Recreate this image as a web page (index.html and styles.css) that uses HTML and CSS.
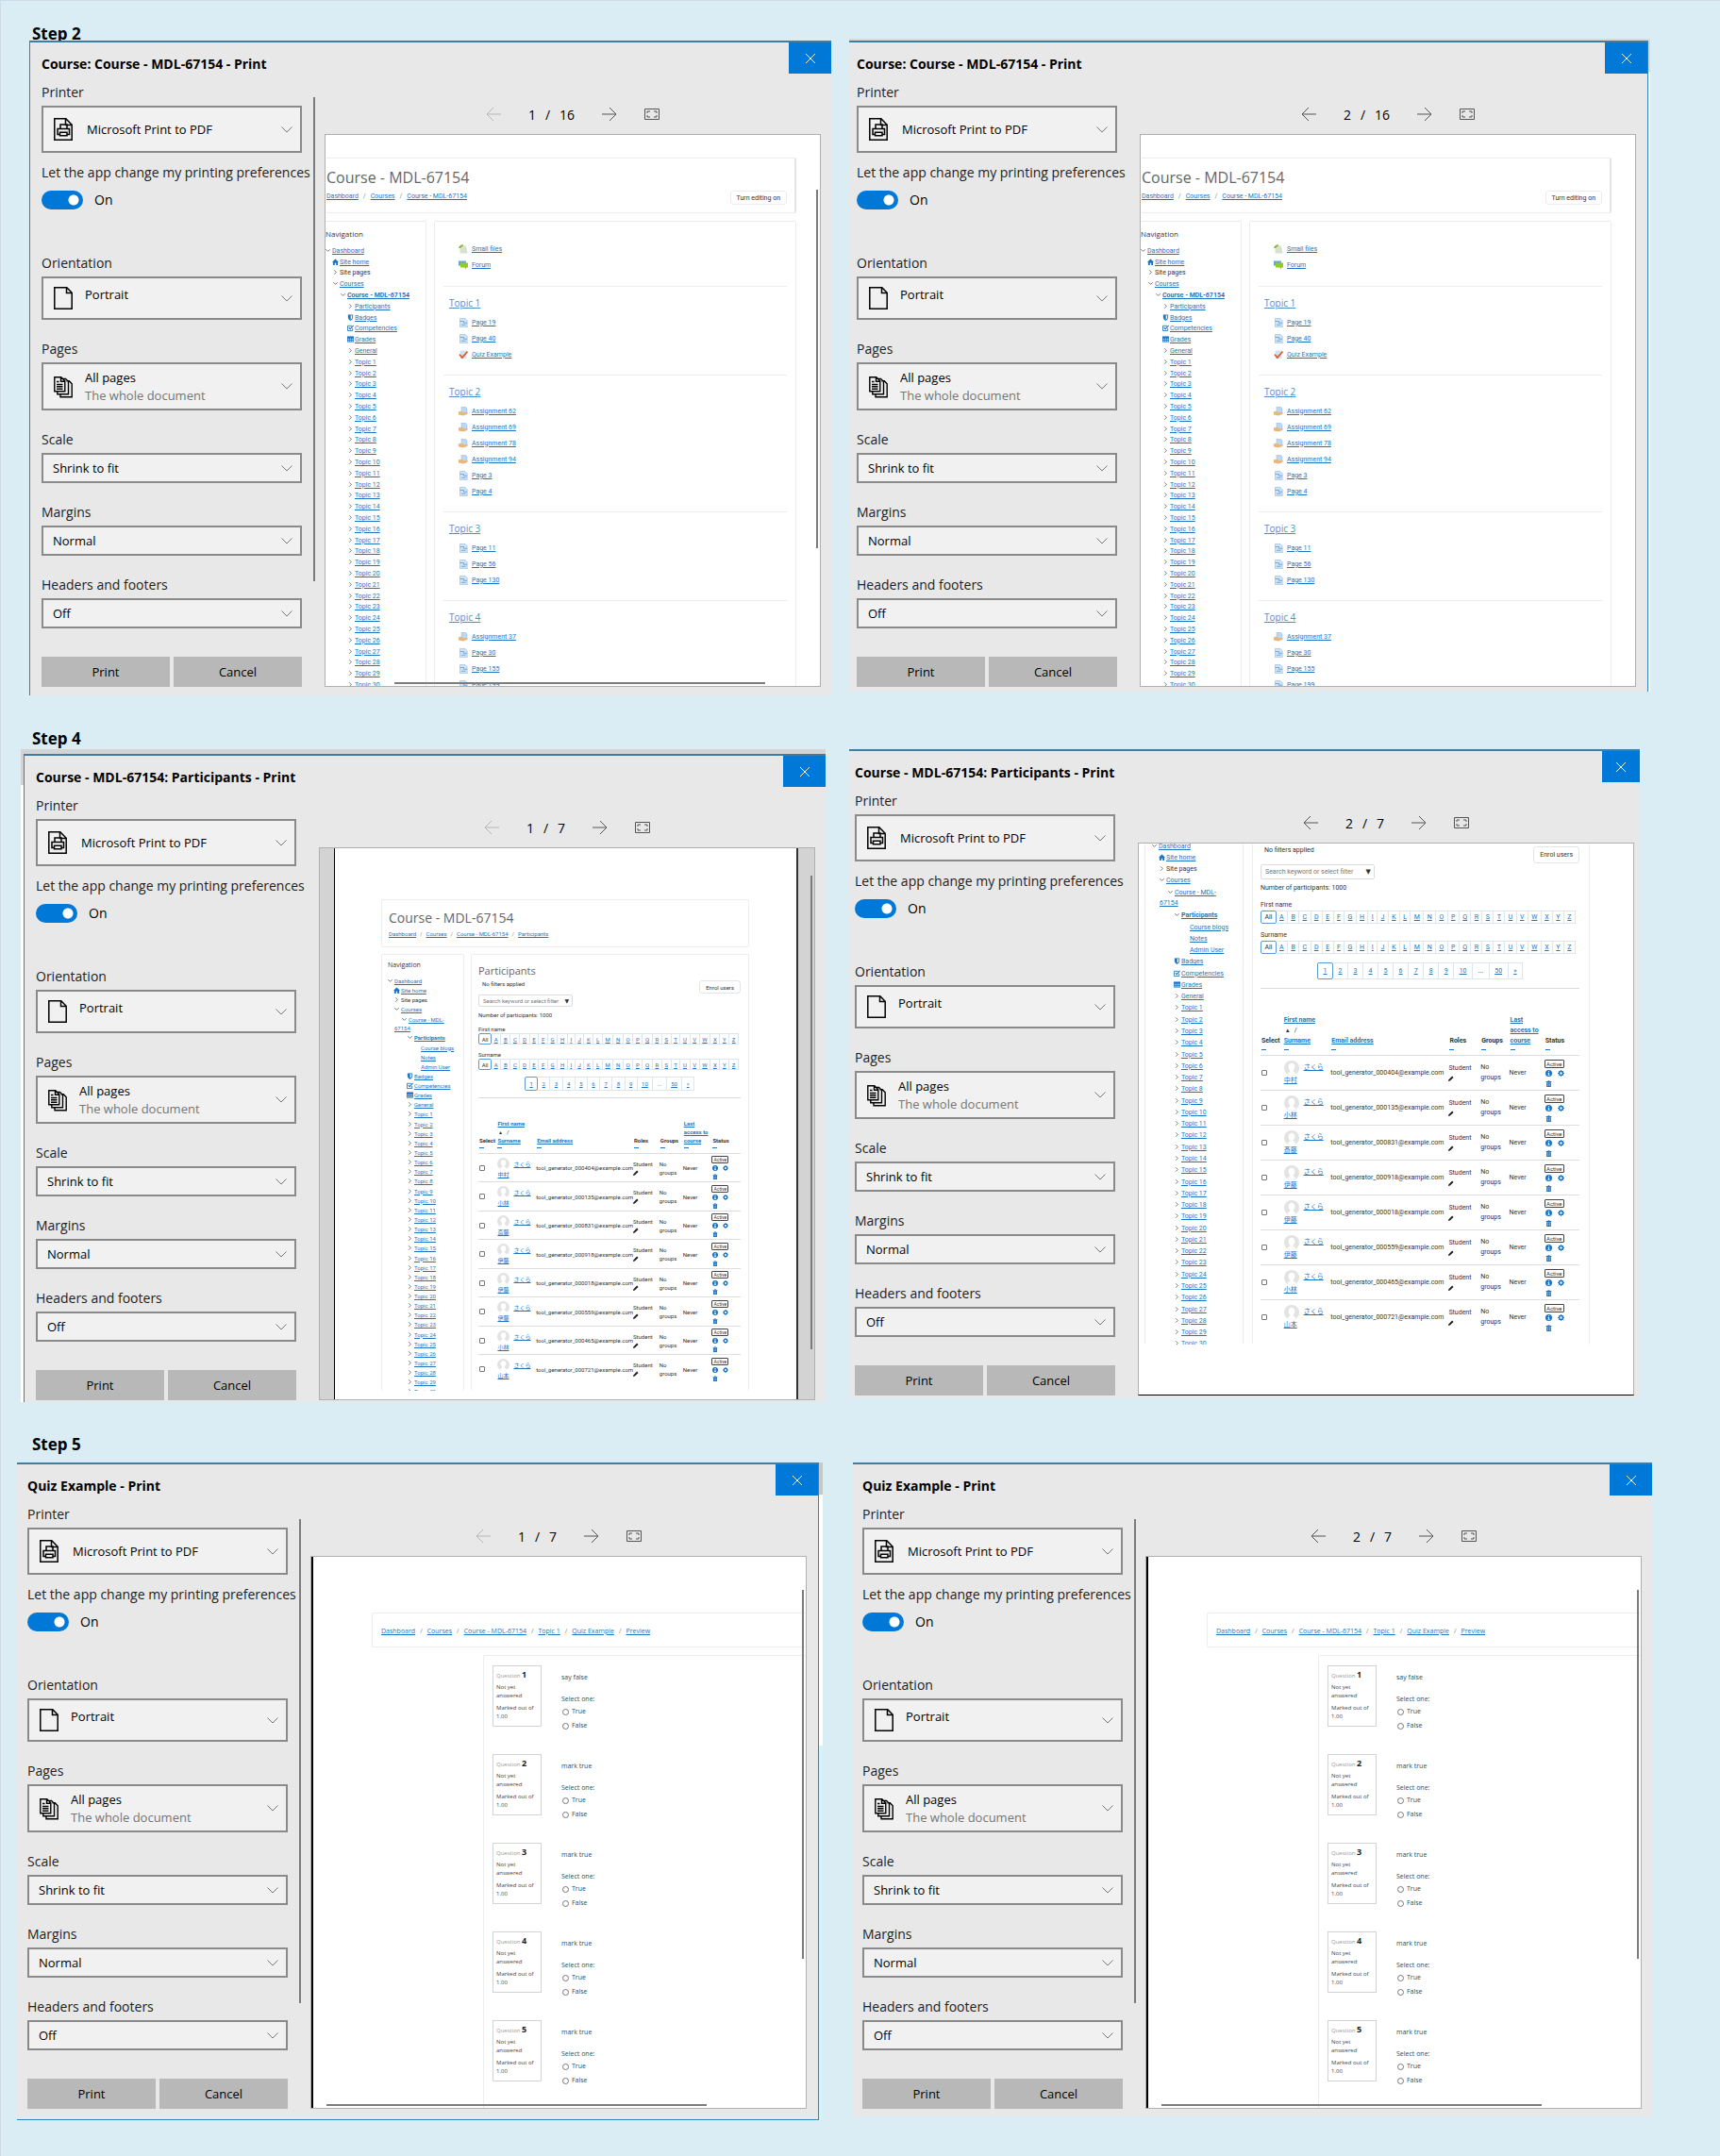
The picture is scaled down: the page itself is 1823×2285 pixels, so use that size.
FILE: index.html
```html
<!DOCTYPE html>
<html lang="en">

<head>
    <meta charset="UTF-8">
    <meta name="viewport" content="width=device-width, initial-scale=1.0">
    <title>Print previews</title>
    <link rel="stylesheet" href="styles.css">
</head>

<body>
    <svg class="symbols" width="0" height="0" aria-hidden="true">
        <symbol id="close" viewBox="0 0 12 12"><path d="M1 1l10 10M11 1L1 11" stroke="#fff" fill="none" /></symbol>
        <symbol id="arrow" viewBox="0 0 16 16"><path d="M0 8h15M8 1l7 7-7 7" stroke="currentColor" fill="none" /></symbol>
        <symbol id="fit" viewBox="0 0 16 12">
            <path d="M.5.5h15v11H.5zM3 5V3h3M10 3h3v2M13 7v2h-3M6 9H3V7" stroke="currentColor" fill="none" />
        </symbol>
        <symbol id="chevron" viewBox="0 0 12 7"><path d="M.5.5L6 6 11.500.5" stroke="#777" fill="none" /></symbol>
        <symbol id="pdf" viewBox="0 0 20 24">
            <path d="M.8.8h12l6.400 6.400v16H.8zM12.500 1v6.500H19" stroke="#000" stroke-width="1.500" fill="none" />
            <path d="M7 11.500V7h7v4.500M6.500 17.500H4v-6h12.500v6H14M6.500 15.200h7.500v3.600H6.500z" stroke="#000" stroke-width="1.500" fill="none" />
        </symbol>
        <symbol id="sheet" viewBox="0 0 20 24">
            <path d="M.8.8h13l5.400 5.400v17H.8zM13.500 1v5.500H19" stroke="#000" stroke-width="1.500" fill="none" />
        </symbol>
        <symbol id="stack" viewBox="0 0 20 24">
            <path d="M.8 1.800h7l4 4v11H.8zM7.500 2v4.200H12M3 6.500h2.500M3 9.500h6.500M3 11.800h6.500M3 14.200h6.500" stroke="#000" stroke-width="1.400" fill="none" />
            <path d="M10 3.500h2.500l3 3v13.200H3.800v-3M13.500 5.800h2.700l3 3v14H7v-3" stroke="#000" stroke-width="1.400" fill="none" />
        </symbol>
        <symbol id="down" viewBox="0 0 8 8"><path d="M1.500 2.500L4 5l2.500-2.500" stroke="#666" fill="none" /></symbol>
        <symbol id="right" viewBox="0 0 8 8"><path d="M2.500 1.500L5 4 2.500 6.500" stroke="#666" fill="none" /></symbol>
        <symbol id="home" viewBox="0 0 8 8"><path d="M0 4.200L4 .5l4 3.700H7V8H4.800V5.500H3.200V8H1V4.200z" fill="#1c75c4" /></symbol>
        <symbol id="shield" viewBox="0 0 8 8">
            <path d="M1 .5h6v3.500Q7 6.500 4 8 1 6.500 1 4z" fill="#1c75c4" /><path d="M4.200 1.500H6V4q0 1.500-1.800 2.600z" fill="#fff" />
        </symbol>
        <symbol id="check" viewBox="0 0 8 8">
            <path d="M6.500 4.500v3h-6v-6h5" stroke="#1c75c4" fill="none" /><path d="M2 3.500l1.700 1.800L7.500 1" stroke="#1c75c4" stroke-width="1.200" fill="none" />
        </symbol>
        <symbol id="grid" viewBox="0 0 8 8">
            <path d="M0 .5h8v7H0z" fill="#1c75c4" /><path d="M.8 3h1.700v1.400H.8zM3.200 3h1.700v1.400H3.200zM5.600 3h1.700v1.400H5.600zM.8 5.300h1.700v1.400H.8zM3.200 5.300h1.700v1.400H3.200zM5.600 5.300h1.700v1.400H5.600z" fill="#cfe4f6" />
        </symbol>
        <symbol id="page" viewBox="0 0 10 10">
            <path d="M1.500.5h5.500L9.200 2.700v7H1.500z" fill="#cfe3f7" stroke="#8fb8e3" stroke-width=".6" />
            <path d="M1.500 3.500h4v1.800h3.500M3 7.300h4.500" stroke="#5f9bd8" stroke-width=".8" fill="none" />
        </symbol>
        <symbol id="assign" viewBox="0 0 10 10">
            <path d="M3 0h4l2 2v5H3z" fill="#bcd8f3" stroke="#8fb8e3" stroke-width=".5" />
            <path d="M0 5.500l2-.8 5 1.800 2.800-.6-.6 2L5 9.500 0 8.500z" fill="#e9b67c" />
        </symbol>
        <symbol id="quiz" viewBox="0 0 10 10">
            <path d="M2 .5h6.500v8.500H2z" fill="#cfe3f7" /><path d="M1 4.500l2.800 3.500L9.500 1.500" stroke="#d5622b" stroke-width="1.800" fill="none" />
        </symbol>
        <symbol id="file" viewBox="0 0 10 10">
            <path d="M1.500 1.500h6.500l1.500 8h-8z" fill="#d9e0cf" /><path d="M0 4Q1 .5 5 .3v1.500Q2.500 2.300 2 4z" fill="#7cb82f" />
        </symbol>
        <symbol id="forum" viewBox="0 0 10 10">
            <path d="M0 .5h8v5H0z" fill="#6ba5dd" /><path d="M2 2.500h8v5H8.500L7.500 9.500 6.500 7.500H2z" fill="#8fce1d" />
        </symbol>
        <symbol id="user" viewBox="0 0 14 14">
            <circle cx="7" cy="7" r="7" fill="#e3e3e3" /><path d="M7 2.500a3 3 0 0 1 3 3.200q0 2-1.500 3.200v1.200l2.500 1.900Q9.200 14 7 14t-4-2l2.500-1.900V8.900Q4 7.700 4 5.700a3 3 0 0 1 3-3.200z" fill="#fff" />
        </symbol>
        <symbol id="pencil" viewBox="0 0 8 8"><path d="M0 8l.6-2.500L5.500.6l1.900 1.900-4.900 4.900z" fill="#222" /></symbol>
        <symbol id="info" viewBox="0 0 8 8">
            <circle cx="4" cy="4" r="4" fill="#1c75c4" /><path d="M3.400 1.300h1.300v1.200H3.400zM3 3.300h1.700v2.500h.5v.9H2.900v-.9h.5V4.200H3z" fill="#fff" />
        </symbol>
        <symbol id="gear" viewBox="0 0 8 8">
            <circle cx="4" cy="4" r="2.300" stroke="#1c75c4" stroke-width="1.800" fill="none" /><path d="M4 0v8M0 4h8M1.200 1.200l1 1M5.800 5.800l1 1M6.800 1.200l-1 1M2.200 5.800l-1 1" stroke="#1c75c4" stroke-dasharray="1.200 5.600" />
        </symbol>
        <symbol id="trash" viewBox="0 0 8 8"><path d="M.8 1.200h2L3.300.3h1.400l.5.900h2v1H.8zM1.300 2.700h5.400V8H1.300z" fill="#1c75c4" /><path d="M3 3.700v3.200M5 3.700v3.200" stroke="#fff" stroke-width=".5" /></symbol>
    </svg>

    <section class="step step-2">
        <h2>Step 2</h2>
        <div class="dialogs"></div>
    </section>
    <section class="step step-4">
        <h2>Step 4</h2>
        <div class="dialogs"></div>
    </section>
    <section class="step step-5">
        <h2>Step 5</h2>
        <div class="dialogs"></div>
    </section>

    <script src="script.js"></script>
</body>

</html>
```
FILE: styles.css
```css
* {
    box-sizing: border-box;
}

body {
    margin: 0;
    border-top: 1px solid #cfdbe8;
    border-left: 1px solid #cfdbe8;
    background: #daedf4;
    color: #000;
    font-family: "Open Sans", "Noto Sans CJK JP", sans-serif;
    font-size: 13px;
}

h1, h2, h3, p, ul {
    margin: 0;
    padding: 0;
    list-style: none;
}

a {
    color: #1c75c4;
}

svg {
    display: block;
}

.symbols {
    position: absolute;
}

/* steps */
.step h2 {
    font-size: 17px;
    line-height: 22px;
}

.dialogs {
    display: grid;
    align-items: start;
}

.step-2 {
    padding: 24px 74px 0 30px;
}

.step-2 h2 {
    padding-left: 3px;
    margin-bottom: -6px;
}

.step-2 .dialogs {
    grid-template-columns: 850fr 849fr;
    gap: 19px;
}

.step-4 {
    padding: 35px 85px 0 21px;
}

.step-4 h2 {
    padding-left: 12px;
}

.step-4 .dialogs {
    grid-template-columns: 853fr 838fr;
    gap: 25px;
}

.step-5 {
    padding: 34px 72px 38px 17px;
}

.step-5 h2 {
    padding-left: 16px;
    margin-bottom: 8px;
}

.step-5 .dialogs {
    grid-template-columns: 854fr 847fr;
    gap: 32px;
}

/* what shows of the browser behind the dialog */
.frame-a {
    padding-top: 2px;
}

.frame-b {
    padding: 2px 2px 0 0;
    background: linear-gradient(#d9d9d9 35px, #fff 35px);
}

.frame-c {
    padding: 5px 0 0 3px;
    background: linear-gradient(#d3d3d3 38px, #fff 38px);
}

.frame-e {
    padding-right: 4px;
    background: linear-gradient(#c8c8c8 34px, #fff 34px, #fff 300px, #d2f3fa 300px);
}

/* dialog */
.dialog {
    position: relative;
    border-top: 2px solid #3b7ea6;
    background: #e8e8e8;
}

.dialog-head {
    display: flex;
    justify-content: space-between;
    align-items: flex-start;
}

.dialog-head h1 {
    padding-top: 13px;
    font-size: 14px;
    line-height: 20px;
}

.close {
    display: grid;
    place-items: center;
    width: 45px;
    height: 33px;
    padding: 0;
    border: 0;
    background: #0078d7;
}

.close svg {
    width: 12px;
    height: 12px;
}

.dialog-body {
    display: grid;
    grid-template-columns: 276px 24px minmax(0, 1fr);
}

.dialog-a .dialog-head {
    padding-left: 12px;
}

.dialog-a .dialog-body {
    padding: 0 11px 9px 12px;
}

.dialog-b .dialog-head {
    padding-left: 8px;
}

.dialog-b .dialog-body {
    padding: 0 12px 5px 8px;
}

.dialog-c .dialog-head {
    padding-left: 12px;
}

.dialog-c .dialog-body {
    padding: 0 11px 2px 12px;
}

.dialog-d .dialog-head {
    padding-left: 6px;
}

.dialog-d .close {
    width: 40px;
}

.dialog-d .dialog-body {
    padding: 0 6px 3px 6px;
}

.dialog-e .dialog-head {
    padding-left: 11px;
}

.dialog-e .dialog-body {
    padding: 0 12px 11px 11px;
}

.dialog-f .dialog-head {
    padding-left: 10px;
}

.dialog-f .dialog-body {
    padding: 0 11px 8px 10px;
}

.dialog-a, .dialog-c {
    border-left: 1px solid #3b7ea6;
}

.dialog-b, .dialog-e {
    border-right: 1px solid #2b87c4;
}

.dialog-e {
    border-bottom: 1px solid #2b87c4;
}

/* settings form */
.settings {
    display: flex;
    flex-direction: column;
    gap: 21px;
    padding-top: 10px;
}

.dialog-head + .dialog-body {
    margin-top: 0;
}

.field label {
    display: block;
    margin-bottom: 4px;
    color: #222;
    font-size: 14px;
    line-height: 20px;
    white-space: nowrap;
}

.picker {
    display: grid;
    align-items: center;
}

.picker > * {
    grid-area: 1 / 1;
}

.picker select {
    appearance: none;
    width: 100%;
    height: 32px;
    padding: 0 28px 0 10px;
    border: 2px solid #8a8a8a;
    border-radius: 0;
    background: #f1f1f1;
    color: #000;
    font: inherit;
}

.picker-icon {
    width: 20px;
    height: 24px;
    margin-left: 13px;
    pointer-events: none;
}

.picker-chevron {
    justify-self: end;
    width: 12px;
    height: 7px;
    margin-right: 10px;
    pointer-events: none;
}

.picker-note {
    align-self: end;
    padding: 0 0 6px 46px;
    color: #767676;
    line-height: 20px;
    pointer-events: none;
}

.picker-printer select {
    height: 50px;
    padding-left: 46px;
}

.picker-orientation select {
    height: 46px;
    padding: 0 28px 8px 44px;
}

.picker-pages select {
    height: 51px;
    padding: 0 28px 20px 44px;
}

.switch-field {
    margin: -10px 0 26px;
}

.switch-field .title {
    margin-bottom: 9px;
}

.switch-row {
    display: flex;
    align-items: center;
    gap: 12px;
    font-size: 14px;
    line-height: 20px;
}

.switch-row input {
    appearance: none;
    width: 44px;
    height: 20px;
    margin: 0;
    border-radius: 10px;
    background: radial-gradient(circle at 34px 10px, #fff 5px, #0078d7 6px);
}

.actions {
    display: flex;
    gap: 4px;
    padding-top: 9px;
}

.actions button {
    flex: 1;
    height: 32px;
    padding: 0;
    border: 0;
    background: #b8b8b8;
    font: inherit;
}

.rail {
    padding: 25px 0 0 12px;
}

.rail i {
    display: block;
    width: 2px;
    height: 513px;
    background: #7c7c7c;
}

/* preview side */
.viewer {
    display: flex;
    flex-direction: column;
    padding-top: 22px;
}

.pager {
    display: flex;
    justify-content: center;
    align-items: center;
    gap: 29px;
    height: 42px;
    font-size: 14px;
}

.pager p {
    display: flex;
    gap: 10px;
}

.pager button {
    padding: 0;
    border: 0;
    background: none;
    color: #555;
}

.pager button:disabled {
    color: #b5b5b5;
}

.pager svg {
    width: 16px;
    height: 16px;
}

.pager .back svg {
    transform: scaleX(-1);
}

.pager .fit svg {
    height: 12px;
}

.preview {
    position: relative;
    flex: 1;
    contain: size;
    overflow: hidden;
    border: 1px solid #b0b0b0;
    background: #fff;
}

.thumb {
    position: absolute;
    background: #7c7c7c;
}

.thumb-y {
    right: 2px;
    width: 2px;
}

.thumb-x {
    bottom: 2px;
    height: 2px;
}

/* printed pages */
.page {
    --row: 10px;
    --indent: 8px;
    --crumb: 5px;
    color: #333;
    font-family: Roboto, "Noto Sans CJK JP", sans-serif;
    font-size: 7px;
    line-height: var(--row);
}

.page h3, .page h4 {
    margin: 0;
    color: #666;
    font-family: "Open Sans", sans-serif;
    font-weight: 400;
}

.card {
    overflow: hidden;
    border: 1px solid #ececec;
    border-radius: 2px;
}

.crumbs, .crumbs li {
    display: flex;
    gap: var(--crumb);
}

.crumbs li + li::before {
    content: "/";
    color: #888;
}

.page button {
    border: 1px solid #ececec;
    border-radius: 3px;
    background: #fff;
    color: #333;
    padding: 0 6px;
    font: inherit;
}

.tree {
    display: grid;
    grid-auto-rows: 1fr;
    white-space: nowrap;
}

.tree li {
    display: flex;
    align-items: center;
}

.tree svg {
    display: inline-block;
    width: 7px;
    height: 7px;
    margin: 0 1px 0 -1px;
    vertical-align: -1px;
}

.tree i {
    display: inline-block;
    width: var(--indent);
}

.lvl-1 { padding-left: var(--indent); }
.lvl-2 { padding-left: calc(var(--indent) * 2); }
.lvl-3 { padding-left: calc(var(--indent) * 3); }
.lvl-4 { padding-left: calc(var(--indent) * 4); }

.tree .wide {
    grid-row: span 2;
}

.tree .wide svg {
    margin-left: var(--indent);
}

/* course page */
.course {
    padding: 24px 25px 0 0;
}

.course .card-head {
    display: flex;
    justify-content: space-between;
    align-items: flex-end;
    margin-bottom: 8px;
    padding: 10px 8px 8px 1px;
    border-left: 0;
    border-right: 2px solid #e4e4e4;
}

.course .card-head h3 {
    font-size: 16px;
    line-height: 20px;
}

.course .crumbs {
    padding: 5px 0 4px;
}

.course button {
    height: 15px;
}

.course .columns {
    display: grid;
    grid-template-columns: 107px minmax(0, 1fr);
    gap: 8px;
}

.course .nav {
    padding-top: 7px;
    border-left: 0;
}

.nav h4 {
    color: #333;
}

.course .nav h4 {
    margin-bottom: 6px;
    font-size: 8px;
    line-height: 12px;
}

.course .tree {
    height: 472px;
}

.course .main {
    padding: 0 9px;
}

.course .topic {
    padding: 8px 0 13px;
    border-bottom: 1px solid #ececec;
}

.course .topic:first-child {
    padding: 20px 0 14px;
}

.topic h4 {
    margin: 0 0 3px 6px;
    font-size: 10px;
    line-height: 18px;
}

.topic h4 a {
    color: #4a90d0;
}

.topic li {
    display: flex;
    align-items: center;
    gap: 4px;
    height: 17px;
    padding-left: 16px;
}

.topic svg {
    width: 10px;
    height: 10px;
}

/* participants page */
.participants {
    --row: 9px;
    --indent: 7px;
    --crumb: 4px;
    --bar: 12px;
    --gap: 6px;
    --foot: 15px;
    margin: 0 17px 0 15px;
    height: 100%;
    padding: 54px 50px 0 49px;
    border-left: 1px solid #000;
    border-right: 2px solid #333;
    background: #fff;
    font-size: 6px;
}

.dialog-c .preview {
    background: #d3d3d3;
}

.dialog-d .preview {
    border-bottom-color: #000;
}

.participants.large {
    --row: 11px;
    --indent: 8px;
    --bar: 14px;
    --gap: 7px;
    --foot: 18px;
    margin: 0;
    padding: 0 46px 0 6px;
    border: 0;
    font-size: 7px;
}

.participants .card-head {
    margin-bottom: 7px;
    padding: 10px 7px 9px;
}

.participants .card-head h3 {
    margin-bottom: 3px;
    font-size: 14px;
    line-height: 18px;
}

.participants .columns {
    display: grid;
    grid-template-columns: 88px minmax(0, 1fr);
    gap: 7px;
    height: 463px;
}

.large .columns {
    grid-template-columns: 105px minmax(0, 1fr);
    gap: 9px;
    height: 531px;
}

.participants .card {
    border-bottom: 0;
}

.participants .card-head {
    border-bottom: 1px solid #ececec;
}

.large .card {
    border-top: 0;
}

.participants .nav {
    padding: 6px 6px 0;
}

.large .nav {
    padding: 0 7px;
}

.participants .nav h4 {
    margin-bottom: 6px;
    font-size: 7px;
    line-height: 10px;
}

.participants .tree {
    height: 446px;
}

.large .tree {
    height: 540px;
    margin-top: -3px;
}

.participants .main {
    padding: 9px 8px 0 7px;
}

.large .main {
    padding: 2px 10px 0 8px;
}

.main-title {
    font-size: 11px;
    line-height: 15px;
}

.participants .main-title {
    margin-bottom: 2px;
}

.filters {
    display: flex;
    justify-content: space-between;
    padding-left: 4px;
}

.filters button {
    height: 14px;
    margin: 1px 0 -6px;
    border-color: #e4e4e4;
}

.large .filters button {
    height: 18px;
    margin-bottom: -8px;
}

.keyword {
    display: flex;
    align-items: center;
    width: 100px;
    height: 13px;
    margin: 7px 0 4px;
    border: 1px solid #dcdcdc;
    border-radius: 2px;
}

.large .keyword {
    width: 121px;
    height: 16px;
    margin-top: 9px;
}

.keyword input {
    flex: 1;
    min-width: 0;
    padding: 0 0 0 4px;
    border: 0;
    background: none;
    font: inherit;
}

.keyword input::placeholder {
    color: #777;
}

.keyword::after {
    content: "▼";
    padding-right: 3px;
    font-family: "DejaVu Sans", sans-serif;
}

.initials {
    padding-top: var(--gap);
}

.initials ul, .pages ul {
    display: flex;
    width: 276px;
    height: var(--bar);
}

.large .initials ul {
    width: 334px;
}

.initials li, .pages li {
    display: grid;
    flex: 1 1 auto;
    place-items: center;
    padding: 0 2px;
    border: 1px solid #dde6ee;
    border-left: 0;
}

.initials li:first-child, .pages li:first-child {
    border: 1px solid #5b9bd5;
    border-radius: 2px;
}

.pages {
    display: flex;
    justify-content: center;
    padding: 7px 0;
    border-bottom: 1px solid #dcdcdc;
}

.pages ul {
    width: 180px;
    height: var(--foot);
}

.large .pages {
    padding: 9px 0;
}

.large .pages ul {
    width: 218px;
}

.people {
    width: 100%;
    margin-top: 22px;
    border-collapse: collapse;
    table-layout: fixed;
}

.large .people {
    margin-top: 28px;
}

.people th, .people td {
    padding: 0;
    text-align: left;
    white-space: nowrap;
}

.people th {
    padding: 0 0 5px 1px;
    vertical-align: bottom;
}

.people th::after {
    content: "";
    display: block;
    width: 5px;
    height: 1px;
    margin-top: 3px;
    background: #1c75c4;
}

.people td {
    height: 30px;
    border-top: 1px solid #dedede;
    vertical-align: middle;
}

.people tr:nth-child(even) td {
    height: 31px;
}

.large .people tbody td {
    height: 37px;
}

.people input {
    appearance: none;
    display: block;
    width: 6px;
    height: 6px;
    margin: 0 0 0 1px;
    border: 1px solid #777;
    border-radius: 1px;
}

.people .sorter {
    padding-left: 2px;
    font-weight: 400;
}

.person {
    display: grid;
    grid-template-columns: 13px 1fr;
    align-items: center;
    column-gap: 4px;
    padding-left: 1px;
}

.large .person {
    grid-template-columns: 16px 1fr;
    column-gap: 5px;
}

.person svg {
    width: 13px;
    height: 13px;
}

.large .person svg {
    width: 16px;
    height: 16px;
}

.pencil {
    width: 6px;
    height: 6px;
    margin: 2px 0 1px;
}

.badge {
    display: block;
    width: 18px;
    height: 8px;
    border: 1px solid #444;
    border-radius: 1px;
    font-size: 5px;
    line-height: 6px;
    text-align: center;
}

.large .badge {
    width: 21px;
    height: 9px;
    font-size: 6px;
    line-height: 7px;
}

.tools {
    display: grid;
    grid-template-columns: 6px 6px;
    gap: 3px 5px;
    padding: 2px 0 0 1px;
}

.tools svg {
    width: 6px;
    height: 6px;
}

.large .tools {
    grid-template-columns: 7px 7px;
    gap: 4px 6px;
}

.large .tools svg {
    width: 7px;
    height: 7px;
}

/* quiz page */
.quiz {
    height: 100%;
    padding-top: 59px;
    border-left: 2px solid #000;
    font-family: "Open Sans", sans-serif;
}

.quiz .card {
    border-right: 0;
    border-bottom: 0;
}

.quiz .card-head {
    height: 37px;
    margin: 0 0 8px 62px;
    padding: 14px 0 0 9px;
    border-bottom: 1px solid #ececec;
}

.quiz .main {
    height: 100%;
    margin-left: 180px;
    padding: 10px 0 0 9px;
}

.question {
    display: grid;
    grid-template-columns: 52px 1fr;
    align-items: start;
    gap: 21px;
    height: 94px;
    color: #24505f;
}

.question-info {
    padding: 3px 3px 1px;
    border: 1px solid #cfd4d8;
    color: #444;
    font-size: 6px;
    line-height: 9px;
}

.question-info p {
    margin-bottom: 4px;
}

.question-info h4 {
    margin-bottom: 2px;
    color: #999;
    font-size: 6px;
    line-height: 11px;
}

.question-info strong {
    color: #222;
    font-size: 9px;
}

.question fieldset {
    margin: 0;
    padding: 8px 0 0;
    border: 0;
}

.question legend {
    float: left;
    width: 100%;
    margin-bottom: 13px;
    padding: 0;
}

.question label {
    display: flex;
    align-items: center;
    gap: 3px;
    margin: 3px 0 5px 1px;
}

.question fieldset p {
    clear: both;
}

.question input {
    appearance: none;
    width: 7px;
    height: 7px;
    margin: 0;
    border: 1px solid #777;
    border-radius: 50%;
}
```
FILE: script.js
```js
const icon = (name, cls = '') => `<svg class="${cls}" aria-hidden="true"><use href="#${name}"></use></svg>`;
const link = text => `<a href="#">${text}</a>`;
const list = (items, fn) => items.map(fn).join('');

const topicRows = Array.from({ length: 30 }, (_, i) => [3, 'right', `Topic ${i + 1}`]);

const courseTree = [
    [0, 'down', 'Dashboard'], [1, 'home', 'Site home'], [1, 'right', 'Site pages', 'plain'], [1, 'down', 'Courses'],
    [2, 'down', '<b>Course - MDL-67154</b>'], [3, 'right', 'Participants'], [3, 'shield', 'Badges'],
    [3, 'check', 'Competencies'], [3, 'grid', 'Grades'], [3, 'right', 'General'], ...topicRows
];

const participantsTree = [
    [0, 'down', 'Dashboard'], [1, 'home', 'Site home'], [1, 'right', 'Site pages', 'plain'], [1, 'down', 'Courses'],
    [1, 'down', 'Course - MDL-<br>67154', 'wide'], [3, 'down', '<b>Participants</b>'], [4, '', 'Course blogs'],
    [4, '', 'Notes'], [4, '', 'Admin User'], [3, 'shield', 'Badges'], [3, 'check', 'Competencies'],
    [3, 'grid', 'Grades'], [3, 'right', 'General'], ...topicRows
];

const topics = [
    ['', [['file', 'Small files'], ['forum', 'Forum']]],
    ['Topic 1', [['page', 'Page 19'], ['page', 'Page 40'], ['quiz', 'Quiz Example']]],
    ['Topic 2', [['assign', 'Assignment 62'], ['assign', 'Assignment 69'], ['assign', 'Assignment 78'],
        ['assign', 'Assignment 94'], ['page', 'Page 3'], ['page', 'Page 4']]],
    ['Topic 3', [['page', 'Page 11'], ['page', 'Page 56'], ['page', 'Page 130']]],
    ['Topic 4', [['assign', 'Assignment 37'], ['page', 'Page 30'], ['page', 'Page 155'], ['page', 'Page 199']]]
];

const people = [
    ['中村', '000404'], ['小林', '000135'], ['斎藤', '000831'], ['伊藤', '000918'],
    ['伊藤', '000018'], ['伊藤', '000559'], ['小林', '000465'], ['山本', '000721']
];

const questions = ['say false', 'mark true', 'mark true', 'mark true', 'mark true'];

const crumbs = items => `<ul class="crumbs">${list(items, t => `<li>${link(t)}</li>`)}</ul>`;

const tree = rows => `<ul class="tree">${list(rows, ([lvl, ic, text, cls]) => `
    <li class="lvl-${lvl} ${cls || ''}"><span>${ic ? icon(ic) : '<i></i>'}${cls === 'plain' ? text : link(text)}</span></li>`)}</ul>`;

const coursePage = () => `
    <div class="page course">
        <div class="card card-head">
            <div>
                <h3>Course - MDL-67154</h3>
                ${crumbs(['Dashboard', 'Courses', 'Course - MDL-67154'])}
            </div>
            <button type="button">Turn editing on</button>
        </div>
        <div class="columns">
            <div class="card nav"><h4>Navigation</h4>${tree(courseTree)}</div>
            <div class="card main">${list(topics, ([name, items]) => `
                <div class="topic">
                    ${name ? `<h4>${link(name)}</h4>` : ''}
                    <ul>${list(items, ([ic, text]) => `<li>${icon(ic)}${link(text)}</li>`)}</ul>
                </div>`)}
            </div>
        </div>
    </div>`;

const initials = title => `
    <div class="initials">
        <p>${title}</p>
        <ul><li>All</li>${list([...'ABCDEFGHIJKLMNOPQRSTUVWXYZ'], c => `<li>${link(c)}</li>`)}</ul>
    </div>`;

const participantsPage = (id, large) => `
    <div class="page participants ${large ? 'large' : ''}">
        ${large ? '' : `<div class="card card-head">
            <h3>Course - MDL-67154</h3>
            ${crumbs(['Dashboard', 'Courses', 'Course - MDL-67154', 'Participants'])}
        </div>`}
        <div class="columns">
            <div class="card nav">${large ? '' : '<h4>Navigation</h4>'}${tree(participantsTree)}</div>
            <div class="card main">
                ${large ? '' : '<h3 class="main-title">Participants</h3>'}
                <div class="filters"><p>No filters applied</p><button type="button">Enrol users</button></div>
                <div class="keyword"><input type="text" aria-label="Search keyword or select filter" placeholder="Search keyword or select filter"></div>
                <p>Number of participants: 1000</p>
                ${initials('First name')}
                ${initials('Surname')}
                <div class="pages"><ul>${list(['1', '2', '3', '4', '5', '6', '7', '8', '9', '10', '...', '50', '»'], n =>
                    `<li>${n === '...' ? n : link(n)}</li>`)}</ul></div>
                <table class="people">
                    <colgroup><col style="width:7%"><col style="width:15%"><col style="width:37%"><col style="width:10%"><col style="width:9%"><col style="width:11%"><col style="width:11%"></colgroup>
                    <thead><tr>
                        <th>Select</th><th>${link('First name')}<br><span class="sorter">▴ &nbsp; /</span><br>${link('Surname')}</th>
                        <th>${link('Email address')}</th><th>Roles</th><th>Groups</th>
                        <th>${link('Last<br>access to<br>course')}</th><th>Status</th>
                    </tr></thead>
                    <tbody>${list(people, ([name, num], i) => `
                        <tr>
                            <td><input type="checkbox" id="${id}-p${i}" aria-label="Select ${name}"></td>
                            <td><div class="person">${icon('user')}${link('さくら')}${link(name)}</div></td>
                            <td>tool_generator_${num}@example.com</td>
                            <td>Student${icon('pencil', 'pencil')}</td>
                            <td>No<br>groups</td>
                            <td>Never</td>
                            <td><span class="badge">Active</span><div class="tools">${icon('info')}${icon('gear')}${icon('trash')}</div></td>
                        </tr>`)}
                    </tbody>
                </table>
            </div>
        </div>
    </div>`;

const quizPage = id => `
    <div class="page quiz">
        <div class="card card-head">${crumbs(['Dashboard', 'Courses', 'Course - MDL-67154', 'Topic 1', 'Quiz Example', 'Preview'])}</div>
        <div class="card main">${list(questions, (text, i) => `
            <div class="question">
                <div class="question-info">
                    <h4>Question <strong>${i + 1}</strong></h4>
                    <p>Not yet<br>answered</p>
                    <p>Marked out of<br>1.00</p>
                </div>
                <fieldset>
                    <legend>${text}</legend>
                    <p>Select one:</p>
                    <label><input type="radio" name="${id}-q${i}">True</label>
                    <label><input type="radio" name="${id}-q${i}">False</label>
                </fieldset>
            </div>`)}
        </div>
    </div>`;

const picker = (id, name, label, value, ic, note) => `
    <div class="field">
        <label for="${id}-${name}">${label}</label>
        <div class="picker picker-${name}">
            <select id="${id}-${name}"><option>${value}</option></select>
            ${ic ? icon(ic, 'picker-icon') : ''}
            ${note ? `<span class="picker-note">${note}</span>` : ''}
            ${icon('chevron', 'picker-chevron')}
        </div>
    </div>`;

// thumbs: [axis, start %, length %]
const dialog = ({ id, title, page, total, content, rail, thumbs }) => `
    <div class="frame frame-${id}">
        <div class="dialog dialog-${id}">
            <div class="dialog-head">
                <h1>${title}</h1>
                <button class="close" type="button" aria-label="Close">${icon('close')}</button>
            </div>
            <div class="dialog-body">
                <form class="settings">
                    ${picker(id, 'printer', 'Printer', 'Microsoft Print to PDF', 'pdf')}
                    <div class="field switch-field">
                        <label class="title" for="${id}-prefs">Let the app change my printing preferences</label>
                        <div class="switch-row"><input type="checkbox" role="switch" id="${id}-prefs" checked><span>On</span></div>
                    </div>
                    ${picker(id, 'orientation', 'Orientation', 'Portrait', 'sheet')}
                    ${picker(id, 'pages', 'Pages', 'All pages', 'stack', 'The whole document')}
                    ${picker(id, 'scale', 'Scale', 'Shrink to fit')}
                    ${picker(id, 'margins', 'Margins', 'Normal')}
                    ${picker(id, 'headers', 'Headers and footers', 'Off')}
                    <div class="actions"><button type="button">Print</button><button type="button">Cancel</button></div>
                </form>
                <div class="rail">${rail ? '<i></i>' : ''}</div>
                <div class="viewer">
                    <div class="pager">
                        <button class="back" type="button" aria-label="Previous page" ${page === 1 ? 'disabled' : ''}>${icon('arrow')}</button>
                        <p><span>${page}</span><span>/</span><span>${total}</span></p>
                        <button type="button" aria-label="Next page">${icon('arrow')}</button>
                        <button class="fit" type="button" aria-label="Fit to window">${icon('fit')}</button>
                    </div>
                    <div class="preview">
                        ${content}
                        ${list(thumbs, ([axis, start, size]) => axis === 'y'
                            ? `<span class="thumb thumb-y" style="top:${start}%;height:${size}%"></span>`
                            : `<span class="thumb thumb-x" style="left:${start}%;width:${size}%"></span>`)}
                    </div>
                </div>
            </div>
        </div>
    </div>`;

const course = { title: 'Course: Course - MDL-67154 - Print', total: 16, content: coursePage() };
const participants = { title: 'Course - MDL-67154: Participants - Print', total: 7 };
const quiz = { title: 'Quiz Example - Print', total: 7, rail: true, thumbs: [['y', 6, 67], ['x', 3, 77]] };

const steps = [
    [
        { ...course, id: 'a', page: 1, rail: true, thumbs: [['y', 10, 65], ['x', 14, 75]] },
        { ...course, id: 'b', page: 2, thumbs: [] }
    ],
    [
        { ...participants, id: 'c', page: 1, content: participantsPage('c', false), thumbs: [['y', 5, 86]] },
        { ...participants, id: 'd', page: 2, content: participantsPage('d', true), thumbs: [] }
    ],
    [
        { ...quiz, id: 'e', page: 1, content: quizPage('e') },
        { ...quiz, id: 'f', page: 2, content: quizPage('f') }
    ]
];

document.querySelectorAll('.dialogs').forEach((el, i) => {
    el.innerHTML = list(steps[i], dialog);
});
```
